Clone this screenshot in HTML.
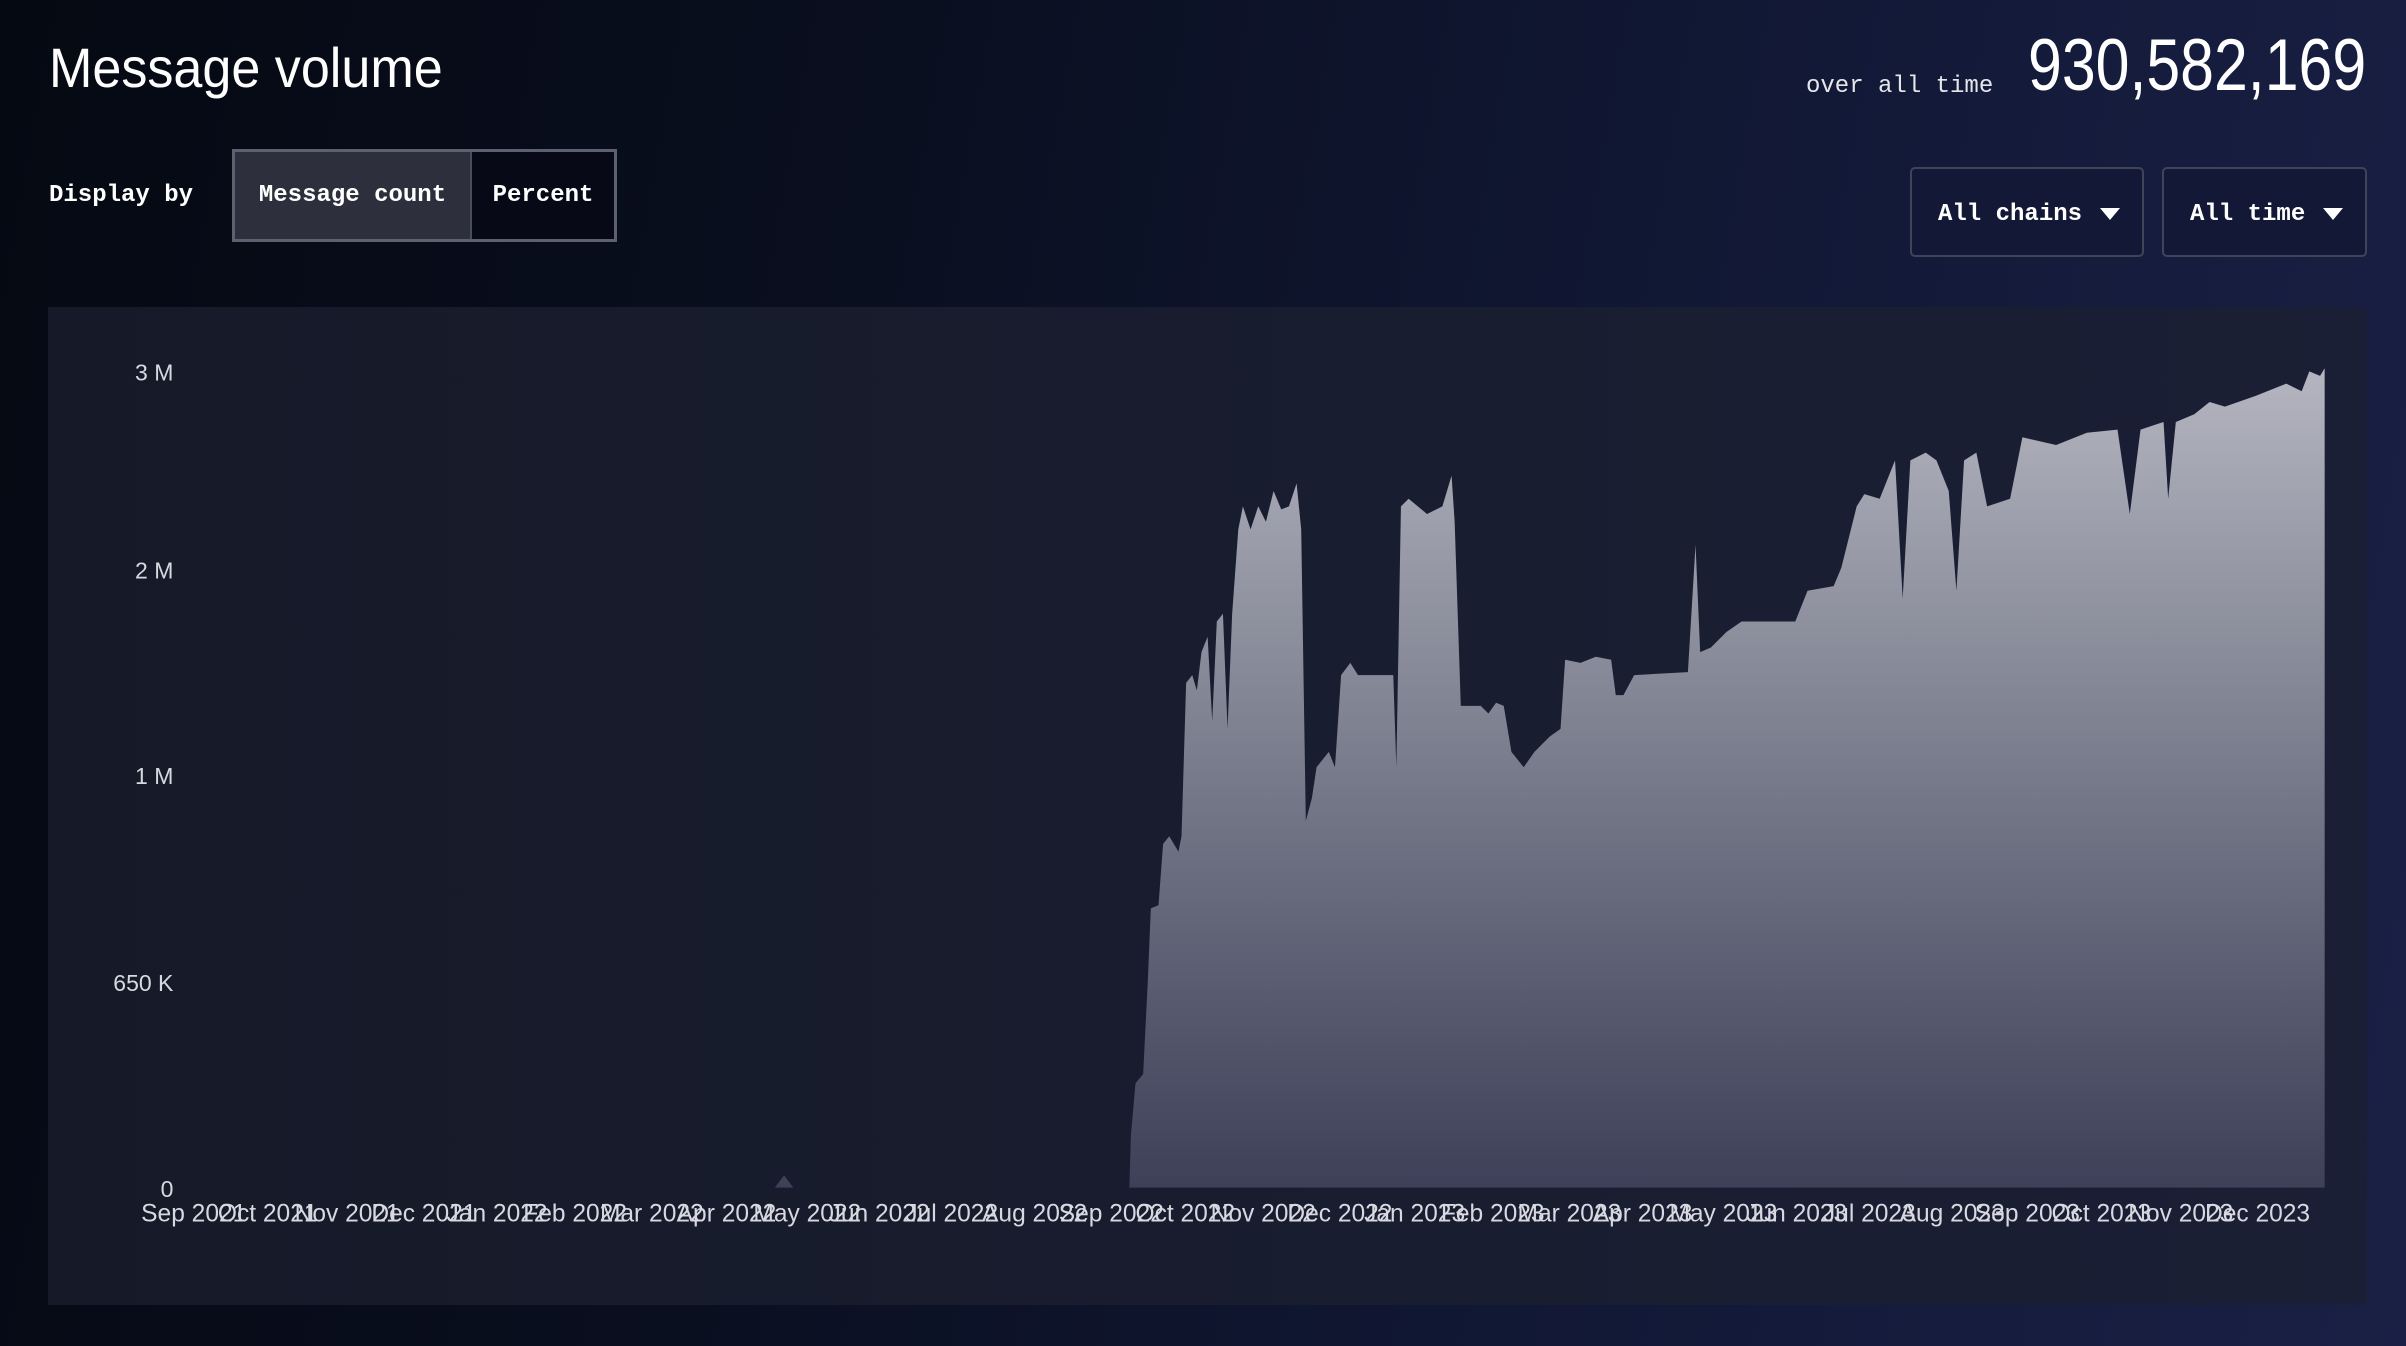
<!DOCTYPE html>
<html><head><meta charset="utf-8"><style>
html,body{margin:0;padding:0;width:2406px;height:1346px;overflow:hidden;}
body{background:linear-gradient(100deg,#050912 0%,#0a0f20 35%,#121937 70%,#1a2045 100%);position:relative;font-family:"Liberation Sans",sans-serif;color:#fff;}
.t{position:absolute;left:49px;top:40px;font-size:56px;line-height:56px;white-space:nowrap;transform:scaleX(0.93);transform-origin:0 0;}
.mono{font-family:"Liberation Mono",monospace;white-space:nowrap;}
.disp{position:absolute;left:49px;top:182px;font-size:24px;line-height:28px;font-weight:bold;}
.tog{position:absolute;left:232px;top:149px;width:385px;height:93px;border:3px solid #5c6070;display:flex;box-sizing:border-box;}
.tog div{display:flex;align-items:center;justify-content:center;font-size:24px;font-weight:bold;}
.tog .a{width:235px;background:#2d303c;border-right:2px solid #4a4e5c;}
.tog .b{flex:1;background:#070a16;}
.ov{position:absolute;left:1806px;top:73px;font-size:24px;line-height:28px;color:#e6e6ea;}
.num{position:absolute;left:2028px;top:29px;font-size:73px;line-height:73px;white-space:nowrap;transform:scaleX(0.833);transform-origin:0 0;}
.dd{position:absolute;top:167px;height:90px;border:2px solid #3f4458;border-radius:5px;box-sizing:border-box;display:flex;align-items:center;padding-left:26px;font-size:24px;font-weight:bold;background:#121836;padding-top:4px;}
.tri{display:inline-block;width:0;height:0;border-left:10px solid transparent;border-right:10px solid transparent;border-top:12px solid #fff;margin-left:18px;}
.panel{position:absolute;left:48px;top:307px;width:2319px;height:998px;background:linear-gradient(90deg,#161a28,#1a1f35);}
svg{position:absolute;left:0;top:0;}
</style></head><body>
<div class="t">Message volume</div>
<div class="disp mono">Display by</div>
<div class="tog mono"><div class="a">Message count</div><div class="b">Percent</div></div>
<div class="ov mono">over all time</div>
<div class="num">930,582,169</div>
<div class="dd mono" style="left:1910px;width:234px;">All chains<span class="tri"></span></div>
<div class="dd mono" style="left:2162px;width:205px;">All time<span class="tri"></span></div>
<div class="panel"></div>
<svg width="2406" height="1346" viewBox="0 0 1568 877.2">
<defs><linearGradient id="g" x1="0" y1="0" x2="0" y2="1"><stop offset="0" stop-color="#b4b5c0"/><stop offset="0.5" stop-color="#777a8a"/><stop offset="1" stop-color="#3d4058"/></linearGradient></defs>
<path fill="url(#g)" d="M118,774 L505,774 L511,766 L517,774 L736,774 L737,740 L740,706 L745,700 L748,640 L750,592 L755,590 L758,550 L762,545 L768,555 L770,545 L773,445 L777,440 L780,450 L783,425 L787,415 L790,470 L793,405 L797,400 L800,475 L803,400 L807,345 L810,330 L815,345 L820,330 L825,340 L830,320 L835,332 L840,330 L845,315 L848,345 L851,535 L855,520 L858,500 L862,495 L866,490 L870,500 L874,440 L880,432 L885,440 L908,440 L910,500 L913,330 L918,325 L930,335 L940,330 L946,310 L948,340 L952,460 L965,460 L970,465 L975,458 L980,460 L985,490 L993,500 L1000,490 L1010,480 L1017,475 L1020,430 L1030,432 L1040,428 L1050,430 L1053,453 L1058,453 L1065,440 L1100,438 L1105,355 L1108,425 L1115,422 L1125,412 L1135,405 L1170,405 L1178,385 L1195,382 L1200,370 L1210,330 L1215,322 L1225,325 L1235,300 L1240,390 L1245,300 L1255,295 L1262,300 L1270,320 L1275,385 L1280,300 L1288,295 L1295,330 L1310,325 L1318,285 L1340,290 L1360,282 L1380,280 L1388,335 L1395,280 L1410,275 L1413,325 L1418,275 L1430,270 L1440,262 L1450,265 L1470,258 L1490,250 L1500,255 L1505,242 L1512,245 L1515,240 L1515,774 Z"/>
<g font-family="Liberation Sans,sans-serif" font-size="15" fill="#d8d9e0" text-anchor="end">
<text x="113" y="248">3 M</text><text x="113" y="377">2 M</text><text x="113" y="511">1 M</text><text x="113" y="646">650 K</text><text x="113" y="780">0</text>
</g>
<g font-family="Liberation Sans,sans-serif" font-size="16" fill="#d8d9e0">
<text x="92" y="796">Sep 2021</text><text x="142" y="796">Oct 2021</text><text x="192" y="796">Nov 2021</text><text x="242" y="796">Dec 2021</text><text x="291" y="796">Jan 2022</text><text x="341" y="796">Feb 2022</text><text x="391" y="796">Mar 2022</text><text x="441" y="796">Apr 2022</text><text x="491" y="796">May 2022</text><text x="540" y="796">Jun 2022</text><text x="590" y="796">Jul 2022</text><text x="640" y="796">Aug 2022</text><text x="690" y="796">Sep 2022</text><text x="740" y="796">Oct 2022</text><text x="789" y="796">Nov 2022</text><text x="839" y="796">Dec 2022</text><text x="889" y="796">Jan 2023</text><text x="939" y="796">Feb 2023</text><text x="989" y="796">Mar 2023</text><text x="1038" y="796">Apr 2023</text><text x="1088" y="796">May 2023</text><text x="1138" y="796">Jun 2023</text><text x="1188" y="796">Jul 2023</text><text x="1238" y="796">Aug 2023</text><text x="1287" y="796">Sep 2023</text><text x="1337" y="796">Oct 2023</text><text x="1387" y="796">Nov 2023</text><text x="1437" y="796">Dec 2023</text>
</g>
</svg>
</body></html>
